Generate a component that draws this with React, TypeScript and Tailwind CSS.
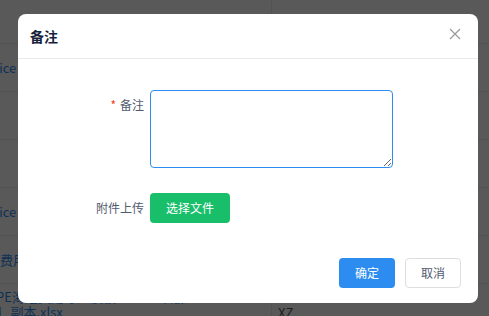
import React from 'react';

const rows = ['rvice', '', '', 'rvice', '海费用'];

function BackgroundTable() {
  return (
    <div className="w-full bg-white text-[13px] text-[#2d8cf0]">
      <div className="flex h-[44px] border-b border-[#e8eaec]">
        <div className="w-[272px] border-r border-[#e8eaec]" />
        <div className="flex-1" />
      </div>
      {rows.map((name, i) => (
        <div key={i} className="flex h-[48px] items-center border-b border-[#e8eaec]">
          <div className="flex h-full w-[272px] items-center overflow-hidden border-r border-[#e8eaec]">
            <span className="-ml-[13px] whitespace-nowrap">{name}</span>
          </div>
          <div className="flex-1" />
        </div>
      ))}
      <div className="flex h-[40px] border-b border-[#e8eaec]">
        <div className="w-[272px] overflow-hidden border-r border-[#e8eaec] pt-[5px] leading-[15px]">
          <div className="-ml-[4px] whitespace-nowrap">PE海运费用导入模板（2023年版）.xlsx</div>
          <div className="-ml-[4px] whitespace-nowrap">1_副本.xlsx</div>
        </div>
        <div className="flex-1 pl-[6px] pt-[19px] text-[#515a6e]">XZ</div>
      </div>
    </div>
  );
}

export default function App() {
  return (
    <div
      className="relative h-[316px] w-[489px] overflow-hidden"
      style={{ fontFamily: '"Noto Sans CJK SC", "Noto Sans", "Liberation Sans", sans-serif' }}
    >
      <BackgroundTable />

      {/* mask */}
      <div className="absolute inset-0 bg-black/65" />

      {/* dialog */}
      <div className="absolute left-[18px] top-[14px] flex h-[289px] w-[460px] flex-col rounded-[8px] bg-white">
        <div className="relative flex h-[45px] items-center border-b border-[#e8eaec] px-[12px]">
          <span className="text-[14px] font-bold text-[#17233d]">备注</span>
          <svg
            className="absolute right-[17px] top-[14px]"
            width="12"
            height="12"
            viewBox="0 0 12 12"
            fill="none"
            stroke="#999"
            strokeWidth="1.2"
          >
            <path d="M1 1L11 11M11 1L1 11" />
          </svg>
        </div>

        <div className="flex-1 pt-[31px]">
          <div className="flex items-start">
            <label className="w-[132px] pr-[6px] pt-[7px] text-right text-[12px] leading-[16px] text-[#515a6e]">
              <span className="mr-[4px] text-[#ed4014]">*</span>备注
            </label>
            <textarea className="h-[78px] w-[243px] resize-y rounded-[4px] border border-[#2d8cf0] px-[7px] py-[4px] text-[12px] outline-none" />
          </div>

          <div className="mt-[25px] flex items-center">
            <label className="w-[132px] pr-[6px] text-right text-[12px] text-[#515a6e]">附件上传</label>
            <button className="h-[30px] w-[80px] rounded-[4px] bg-[#19be6b] text-[12px] text-white">
              选择文件
            </button>
          </div>
        </div>

        <div className="flex justify-end gap-[10px] px-[17px] pb-[15px]">
          <button className="h-[30px] w-[56px] rounded-[4px] bg-[#2d8cf0] text-[12px] text-white">确定</button>
          <button className="h-[30px] w-[56px] rounded-[4px] border border-[#dcdee2] bg-white text-[12px] text-[#515a6e]">
            取消
          </button>
        </div>
      </div>
    </div>
  );
}
